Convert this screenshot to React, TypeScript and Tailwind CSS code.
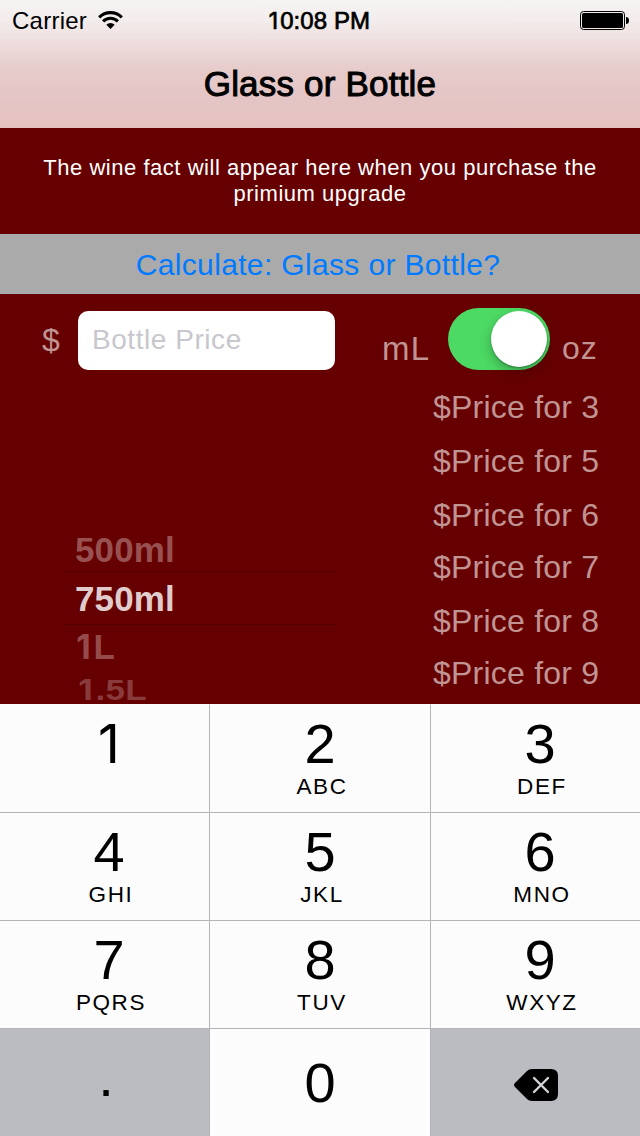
import React from 'react';

const prices = [
  { size: 3, gap: 'mt-0' },
  { size: 5, gap: 'mt-0.5' },
  { size: 6, gap: 'mt-0.5' },
  { size: 7, gap: 'mt-0' },
  { size: 8, gap: 'mt-0.5' },
  { size: 9, gap: 'mt-0' },
];

const keys = [
  { digit: '1', letters: '' },
  { digit: '2', letters: 'ABC' },
  { digit: '3', letters: 'DEF' },
  { digit: '4', letters: 'GHI' },
  { digit: '5', letters: 'JKL' },
  { digit: '6', letters: 'MNO' },
  { digit: '7', letters: 'PQRS' },
  { digit: '8', letters: 'TUV' },
  { digit: '9', letters: 'WXYZ' },
];

// a "1" without the foot
function One() {
  return <span className="inline-block w-[0.58em] text-center font-[Inter,sans-serif] text-[0.96em]">1</span>;
}

function StatusBar() {
  return (
    <div className="grid h-10 grid-cols-3 items-center px-3 text-[24px] leading-[42px]">
      <div className="flex items-center gap-[11px]">
        <span className="tracking-[0.25px]">Carrier</span>
        <svg className="-mt-[3px]" width="25" height="18" viewBox="0 0 25 18" fill="none" stroke="black" strokeWidth="3.1">
          <path d="M1.2 6.3a16 16 0 0 1 22.6 0" />
          <path d="M5.1 10.3a10.5 10.5 0 0 1 14.8 0" />
          <path d="M8.3 13.7a6 6 0 0 1 8.4 0L12.5 18z" fill="black" stroke="none" />
        </svg>
      </div>
      <div className="pr-[3px] text-center whitespace-nowrap tracking-[0.1px] [-webkit-text-stroke:0.7px_black]">
        <One />0:08 PM
      </div>
      <svg className="-mt-[2px] -mr-[2px] justify-self-end" width="50" height="20" viewBox="0 0 50 20">
        <rect x="0.5" y="1.5" width="44" height="18" rx="3" fill="none" stroke="black" />
        <rect x="2" y="3" width="41" height="15" rx="1.5" fill="black" />
        <path d="M46 7a3 3.5 0 0 1 0 7z" fill="black" />
      </svg>
    </div>
  );
}

function Picker() {
  return (
    <div className="ml-16 mt-[157px] w-[272px] font-bold text-[35px] text-[#985050]">
      <div className="h-11 pl-[11px] leading-[46px] tracking-[0.1px]">500ml</div>
      <div className="h-[54px] border-y border-[#520000] pl-[11px] text-[#e0cccc] leading-[53px] tracking-[0.1px]">
        750ml
      </div>
      <div className="h-11 pl-[10px] leading-[44px] tracking-[0.5px] text-[#954b4b]">
        <One />L
      </div>
      <div className="mt-1 h-[34px] scale-y-[0.83] pl-[12px] leading-[34px] tracking-[0.3px] text-[#893a3a]">
        <One />.5L
      </div>
    </div>
  );
}

function Keypad() {
  return (
    <div className="grid h-[432px] grid-cols-[210px_220px_210px] grid-rows-4 bg-[#fcfcfc] text-black">
      {keys.map((key, i) => (
        <div
          key={key.digit}
          className={`flex flex-col items-center border-[#b4b4b9] ${i > 2 ? 'border-t' : 'border-t border-t-transparent'} ${
            i % 3 === 0 ? 'border-r pl-[9px]' : i % 3 === 2 ? 'border-l pl-[9px]' : ''
          }`}
        >
          <div className="h-[68px] text-[56px] leading-[78px]">
            {key.digit === '1' ? <One /> : key.digit}
          </div>
          <div className="pl-1 text-[22.5px] leading-[28px] tracking-[1.6px]">{key.letters}</div>
        </div>
      ))}
      <div className="border-t border-r border-[#b4b4b9] bg-[#babcc1] pl-[3px] text-center text-[56px] leading-[95px]">.</div>
      <div className="border-t border-[#b4b4b9] text-center text-[56px] leading-[107px]">0</div>
      <div className="flex items-center justify-center border-t border-l border-[#b4b4b9] bg-[#babcc1]">
        <svg className="mt-1" width="44" height="32" viewBox="0 0 44 32">
          <path d="M18 0H37Q44 0 44 7V25Q44 32 37 32H18Q15 32 13 30L1 18Q-1 16 1 14L13 2Q15 0 18 0Z" fill="black" />
          <path d="M20 9L34 23M34 9L20 23" stroke="#d2d4d8" strokeWidth="2.4" strokeLinecap="round" />
        </svg>
      </div>
    </div>
  );
}

export default function App() {
  return (
    <div className="h-[1136px] w-[640px] overflow-hidden bg-[#660000] font-['Liberation_Sans',Arial,sans-serif]">
      <header className="h-32 bg-[linear-gradient(to_bottom,#f5f3f2_0px,#f3eeed_18px,#eee0df_40px,#e7cccc_68px,#e5c6c6_90px,#e4c2c0_128px)] text-black">
        <StatusBar />
        <h1 className="text-center text-[35px] leading-[88px] tracking-[0.2px] [-webkit-text-stroke:1px_black]">
          Glass or Bottle
        </h1>
      </header>

      <p className="h-[106px] px-8 pt-[27px] text-center text-[22px] leading-[26px] tracking-[0.53px] text-white">
        The wine fact will appear here when you purchase the
        <br />
        primium upgrade
      </p>

      <button className="block h-[60px] w-full bg-[#aaaaaa] pr-1 text-center text-[30px] leading-[62px] tracking-[0.35px] text-[#007aff]">
        Calculate: Glass or Bottle?
      </button>

      <div className="flex h-[410px] text-[32px] text-[#c19494]">
        <div className="w-[340px]">
          <div className="flex h-[76px] items-center pt-4">
            <span className="w-[78px] pl-[42px] leading-[60px]">$</span>
            <input
              className="h-[59px] w-[257px] rounded-[10px] bg-white pl-[14px] text-[28px] tracking-[0.55px] placeholder:text-[#c7c7cd]"
              placeholder="Bottle Price"
            />
          </div>
          <Picker />
        </div>

        <div className="w-[300px]">
          <div className="flex h-[87px] pt-[14px] pl-[42px]">
            <span className="w-[66px] text-[33px] leading-[81px] tracking-[1.2px]">mL</span>
            <div className="flex h-[62px] w-[102px] justify-end rounded-full bg-[#4cd964] p-[3px]">
              <div className="size-14 rounded-full bg-white shadow-[0_5px_12px_rgba(0,0,0,0.25),0_1px_2px_rgba(0,0,0,0.3)]" />
            </div>
            <span className="pl-3 leading-[81px] tracking-[0.9px]">oz</span>
          </div>
          {prices.map(({ size, gap }) => (
            <div key={size} className={`${gap} pl-[93px] leading-[52px] tracking-[0.22px]`}>
              $Price for {size}
            </div>
          ))}
        </div>
      </div>

      <Keypad />
    </div>
  );
}
